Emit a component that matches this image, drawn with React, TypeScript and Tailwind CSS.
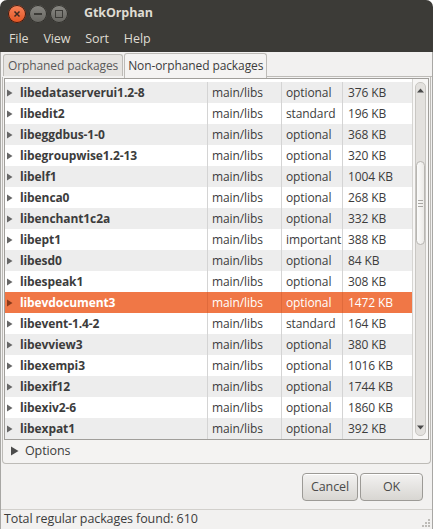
import React from 'react';

type Pkg = { name: string; section: string; priority: string; size: string };

const packages: Pkg[] = [
  { name: 'libedataserverui1.2-8', section: 'main/libs', priority: 'optional', size: '376 KB' },
  { name: 'libedit2', section: 'main/libs', priority: 'standard', size: '196 KB' },
  { name: 'libeggdbus-1-0', section: 'main/libs', priority: 'optional', size: '368 KB' },
  { name: 'libegroupwise1.2-13', section: 'main/libs', priority: 'optional', size: '320 KB' },
  { name: 'libelf1', section: 'main/libs', priority: 'optional', size: '1004 KB' },
  { name: 'libenca0', section: 'main/libs', priority: 'optional', size: '268 KB' },
  { name: 'libenchant1c2a', section: 'main/libs', priority: 'optional', size: '332 KB' },
  { name: 'libept1', section: 'main/libs', priority: 'important', size: '388 KB' },
  { name: 'libesd0', section: 'main/libs', priority: 'optional', size: '84 KB' },
  { name: 'libespeak1', section: 'main/libs', priority: 'optional', size: '308 KB' },
  { name: 'libevdocument3', section: 'main/libs', priority: 'optional', size: '1472 KB' },
  { name: 'libevent-1.4-2', section: 'main/libs', priority: 'standard', size: '164 KB' },
  { name: 'libevview3', section: 'main/libs', priority: 'optional', size: '380 KB' },
  { name: 'libexempi3', section: 'main/libs', priority: 'optional', size: '1016 KB' },
  { name: 'libexif12', section: 'main/libs', priority: 'optional', size: '1744 KB' },
  { name: 'libexiv2-6', section: 'main/libs', priority: 'optional', size: '1860 KB' },
  { name: 'libexpat1', section: 'main/libs', priority: 'optional', size: '392 KB' },
];

const SELECTED = 10;

function Arrow({ className }: { className?: string }) {
  return (
    <svg width="7" height="8" viewBox="0 0 7 8" className={className}>
      <path d="M1 0.5 L6.5 4 L1 7.5 Z" fill="currentColor" />
    </svg>
  );
}

function TitleButton({ kind }: { kind: 'close' | 'min' | 'max' }) {
  if (kind === 'close') {
    return (
      <div className="flex h-[18px] w-[18px] items-center justify-center rounded-full bg-gradient-to-b from-[#f7845a] to-[#e2531f] shadow-[inset_0_0_0_1px_#3a1a10]">
        <svg width="8" height="8" viewBox="0 0 8 8">
          <path d="M1.5 1.5 L6.5 6.5 M6.5 1.5 L1.5 6.5" stroke="#3c2a22" strokeWidth="1.5" />
        </svg>
      </div>
    );
  }
  return (
    <div className="flex h-[18px] w-[18px] items-center justify-center rounded-full bg-gradient-to-b from-[#8a8984] to-[#65645f] shadow-[inset_0_0_0_1px_#2f2e2a]">
      {kind === 'min' ? (
        <div className="h-[2px] w-[8px] bg-[#3c3b37]" />
      ) : (
        <div className="h-[8px] w-[8px] border border-[#3c3b37]" />
      )}
    </div>
  );
}

export default function App() {
  return (
    <div className="flex h-[529px] w-[433px] flex-col overflow-hidden rounded-t-[7px] bg-[#f2f1f0] font-['Open_Sans',sans-serif] text-[12px] tracking-[-0.1px] text-[#3c3c3c]">
      {/* title bar + menu */}
      <div className="bg-[#3c3b37]">
        <div className="flex h-[27px] items-center pl-[8px]">
          <div className="flex gap-[3px]">
            <TitleButton kind="close" />
            <TitleButton kind="min" />
            <TitleButton kind="max" />
          </div>
          <div className="ml-[16px] text-[12.5px] font-bold text-[#dfdbd2]">GtkOrphan</div>
        </div>
        <div className="flex h-[25px] items-center gap-[15px] pl-[9px] text-[12.5px] text-[#dfdbd2]">
          <span>File</span>
          <span>View</span>
          <span>Sort</span>
          <span>Help</span>
        </div>
      </div>

      <div className="flex flex-1 flex-col border-x border-[#a8a7a4]">
        {/* tabs */}
        <div className="flex h-[25px] items-end pl-[2px] pt-[1px]">
          <div className="mb-[1px] flex h-[22px] items-center rounded-t-[3px] border border-b-0 border-[#bdbbb7] bg-[#e6e4e1] px-[4px] text-[#5a5a5a]">
            Orphaned packages
          </div>
          <div className="relative -mb-[1px] ml-[1px] flex h-[25px] items-center rounded-t-[3px] border border-b-0 border-[#bdbbb7] bg-[#f4f3f2] px-[3px] text-[#3c3c3c]">
            Non-orphaned packages
          </div>
          <div className="flex-1 border-b border-[#bdbbb7]" />
        </div>

        {/* notebook page */}
        <div className="mx-[1px] flex h-[387px] flex-col rounded-b-[4px] border border-t-0 border-[#bdbbb7] bg-[#f4f3f2]">
          <div className="mx-[1px] mt-[1px] flex h-[362px] border border-[#a09e9a] bg-white">
            <div className="flex-1 pt-[3px]">
              {packages.map((p, i) => {
                const sel = i === SELECTED;
                const rowBg = sel ? 'bg-[#f07746] text-white' : i % 2 === 0 ? 'bg-[#ededed]' : 'bg-white';
                const sep = sel ? 'border-[#e06a3b]' : 'border-[#d4d4d4]';
                return (
                  <div key={p.name} className={`flex h-[21px] items-center ${rowBg}`}>
                    <div className={`flex h-full w-[203px] items-center border-r ${sep}`}>
                      <Arrow className={`ml-[1px] mr-[7px] ${sel ? 'text-[#8a3a1a]' : 'text-[#666666]'}`} />
                      <span className="font-bold">{p.name}</span>
                    </div>
                    <div className={`flex h-full w-[74px] items-center border-r ${sep} pl-[4px]`}>{p.section}</div>
                    <div className={`flex h-full w-[61px] items-center border-r ${sep} pl-[4px]`}>{p.priority}</div>
                    <div className="flex h-full flex-1 items-center pl-[5px]">{p.size}</div>
                  </div>
                );
              })}
            </div>
            {/* scrollbar */}
            <div className="flex w-[16px] border-l border-[#d6d5d2] bg-[#f7f6f5] px-[2px] py-[3px]">
              <div className="flex flex-1 flex-col items-center rounded-[5px] border border-[#c9c7c3] bg-[#e3e1de]">
                <svg width="7" height="5" viewBox="0 0 7 5" className="mt-[5px]">
                  <path d="M0 4.5 L3.5 0.5 L7 4.5 Z" fill="#4a4a4a" />
                </svg>
                <div className="mt-[68px] flex h-[84px] w-full flex-col items-center justify-center gap-[2px] rounded-[5px] border border-[#b8b6b2] bg-gradient-to-r from-[#fbfbfa] to-[#eceae7]">
                  <div className="h-px w-[5px] bg-[#a9a7a3]" />
                  <div className="h-px w-[5px] bg-[#a9a7a3]" />
                  <div className="h-px w-[5px] bg-[#a9a7a3]" />
                </div>
                <div className="flex-1" />
                <svg width="7" height="5" viewBox="0 0 7 5" className="mb-[5px]">
                  <path d="M0 0.5 L3.5 4.5 L7 0.5 Z" fill="#4a4a4a" />
                </svg>
              </div>
            </div>
          </div>
          <div className="flex h-[22px] items-center pl-[7px]">
            <svg width="9" height="10" viewBox="0 0 9 10" className="mr-[6px]">
              <path d="M1 0.5 L8.5 5 L1 9.5 Z" fill="#4c4c4c" />
            </svg>
            <span className="text-[12.5px]">Options</span>
          </div>
        </div>

        {/* buttons */}
        <div className="flex justify-end gap-[2px] pr-[9px] pt-[9px]">
          <button className="h-[28px] w-[56px] rounded-[4px] border border-[#9c9a96] bg-gradient-to-b from-[#f3f2f1] to-[#d8d6d2] text-[12.5px] text-[#4a4a4a] shadow-[inset_0_1px_0_#fff]">
            Cancel
          </button>
          <button className="h-[28px] w-[63px] rounded-[4px] border border-[#9c9a96] bg-gradient-to-b from-[#f3f2f1] to-[#d8d6d2] text-[12.5px] text-[#4a4a4a] shadow-[inset_0_1px_0_#fff]">
            OK
          </button>
        </div>

        <div className="flex-1" />
        {/* status bar */}
        <div className="relative flex h-[20px] items-center border-t border-[#d2d0cc] pl-[3px] text-[12.5px] text-[#3c3c3c]">
          Total regular packages found: 610
          <div className="absolute bottom-[2px] right-[2px] grid grid-cols-3 gap-[1px]">
            {Array.from({ length: 9 }).map((_, i) => (
              <div key={i} className={`h-[2px] w-[2px] ${[2, 4, 5, 6, 7, 8].includes(i) ? 'bg-[#bdbbb7]' : 'bg-transparent'}`} />
            ))}
          </div>
        </div>
      </div>
    </div>
  );
}
